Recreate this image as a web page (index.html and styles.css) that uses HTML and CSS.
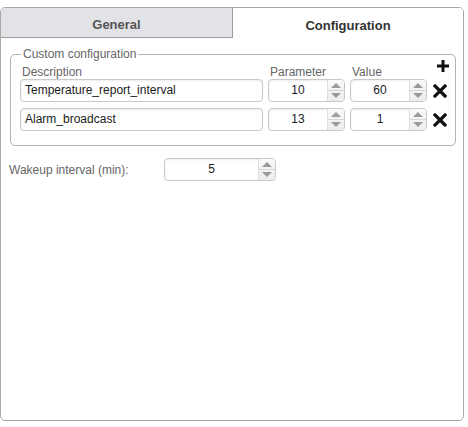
FILE: index.html
```html
<!DOCTYPE html>
<html>
<head>
<meta charset="utf-8">
<link rel="stylesheet" href="styles.css">
</head>
<body>
<div class="panel">
  <div class="tabs">
    <div class="tab tab-inactive">General</div>
    <div class="tab tab-active">Configuration</div>
  </div>
  <div class="content">
    <fieldset class="group">
      <legend>Custom configuration</legend>
      <div class="row header">
        <div class="c-desc">Description</div>
        <div class="c-num">Parameter</div>
        <div class="c-num">Value</div>
        <div class="c-act">
          <svg class="plus" width="12" height="12" viewBox="0 0 12 12"><path d="M4.5 0h3v4.5H12v3H7.5V12h-3V7.5H0v-3h4.5z" fill="#111"/></svg>
        </div>
      </div>
      <div class="row first">
        <div class="c-desc"><div class="text">Temperature_report_interval</div></div>
        <div class="c-num"><div class="spin"><div class="val">10</div><div class="arrows"><span class="up"></span><span class="down"></span></div></div></div>
        <div class="c-num"><div class="spin"><div class="val">60</div><div class="arrows"><span class="up"></span><span class="down"></span></div></div></div>
        <div class="c-act"><svg width="14" height="14" viewBox="0 0 14 14"><path d="M2 2L12 12M12 2L2 12" stroke="#111" stroke-width="3.2" stroke-linecap="square"/></svg></div>
      </div>
      <div class="row">
        <div class="c-desc"><div class="text">Alarm_broadcast</div></div>
        <div class="c-num"><div class="spin"><div class="val">13</div><div class="arrows"><span class="up"></span><span class="down"></span></div></div></div>
        <div class="c-num"><div class="spin"><div class="val">1</div><div class="arrows"><span class="up"></span><span class="down"></span></div></div></div>
        <div class="c-act"><svg width="14" height="14" viewBox="0 0 14 14"><path d="M2 2L12 12M12 2L2 12" stroke="#111" stroke-width="3.2" stroke-linecap="square"/></svg></div>
      </div>
    </fieldset>
    <div class="wake">
      <div class="wake-label">Wakeup interval (min):</div>
      <div class="spin wake-spin"><div class="val">5</div><div class="arrows"><span class="up"></span><span class="down"></span></div></div>
    </div>
  </div>
</div>
</body>
</html>
```
FILE: styles.css
```css
html, body {
  margin: 0;
  padding: 0;
  background: #fff;
  font-family: "Liberation Sans", Arial, sans-serif;
}
.panel {
  box-sizing: border-box;
  width: 464px;
  height: 414px;
  margin-top: 7px;
  border: 1px solid #a8a8a8;
  border-radius: 5px;
  overflow: hidden;
}
.tabs {
  display: flex;
  height: 30px;
}
.tab {
  box-sizing: border-box;
  display: flex;
  align-items: center;
  justify-content: center;
  font-size: 13px;
  font-weight: bold;
  height: 30px;
  padding-top: 4px;
}
.tab-inactive {
  width: 232px;
  background: #e1e3e6;
  color: #555;
  border-right: 1px solid #9c9c9c;
  border-bottom: 1px solid #9c9c9c;
}
.tab-active {
  flex: 1;
  background: #fff;
  color: #333;
}
.content {
  padding: 0 0 0 8px;
}
.group {
  box-sizing: border-box;
  width: 446px;
  margin: 9px 0 0 1px;
  padding: 0 8px 14px 9px;
  border: 1px solid #b4b4b4;
  border-radius: 5px;
  min-width: 0;
}
.group legend {
  font-size: 12px;
  line-height: 14px;
  color: #666;
  padding: 0 2px;
  margin-left: 1px;
}
.row {
  display: flex;
  align-items: center;
  height: 23px;
  margin-top: 6px;
}
.row.first { margin-top: 0; }
.row.header {
  height: 14px;
  margin-top: 4px;
  align-items: flex-start;
}
.header > div {
  font-size: 12px;
  line-height: 14px;
  color: #666;
}
.header .c-desc { padding-left: 2px; box-sizing: border-box; }
.header .c-num { padding-left: 2px; box-sizing: border-box; }
.c-desc { width: 243px; margin-right: 5px; }
.c-num { width: 77px; margin-right: 5px; }
.c-num + .c-num { margin-right: 6px; }
.c-act {
  width: 14px;
  height: 14px;
  display: flex;
  justify-content: center;
  align-items: center;
}
.header .c-act { position: relative; }
.plus { position: absolute; left: 4px; top: -5px; }
.text {
  box-sizing: border-box;
  height: 23px;
  border: 1px solid #c9c9c9;
  border-radius: 4px;
  box-shadow: inset 0 1px 2px rgba(0,0,0,0.08);
  font-size: 12px;
  line-height: 21px;
  padding-left: 4px;
  color: #1b1b1b;
  background: #fff;
}
.spin {
  box-sizing: border-box;
  display: flex;
  height: 23px;
  border: 1px solid #c9c9c9;
  border-radius: 4px;
  box-shadow: inset 0 1px 2px rgba(0,0,0,0.08);
  background: #fff;
  overflow: hidden;
}
.val {
  flex: 1;
  text-align: center;
  font-size: 12px;
  line-height: 21px;
  color: #1a1a2a;
}
.arrows {
  width: 16px;
  border-left: 1px solid #dedede;
  background: linear-gradient(#fafafa, #ececec);
  display: flex;
  flex-direction: column;
}
.arrows span {
  flex: 1;
  position: relative;
}
.arrows .up { border-bottom: 1px solid #d6d6d6; }
.arrows .up::after, .arrows .down::after {
  content: "";
  position: absolute;
  left: 3px;
  width: 0;
  height: 0;
  border-left: 5px solid transparent;
  border-right: 5px solid transparent;
}
.arrows .up::after {
  bottom: 2px;
  border-bottom: 5px solid #9a9a9a;
}
.arrows .down::after {
  top: 2px;
  border-top: 5px solid #9a9a9a;
}
.wake {
  display: flex;
  align-items: center;
  margin-top: 12px;
}
.wake-label {
  width: 155px;
  font-size: 12px;
  color: #666;
}
.wake-spin {
  width: 112px;
}
```
